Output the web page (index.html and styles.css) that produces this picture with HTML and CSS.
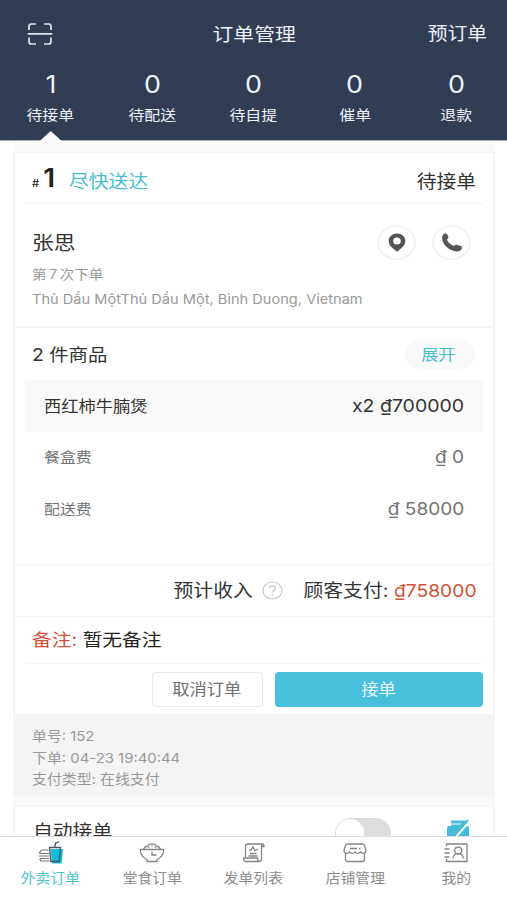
FILE: index.html
```html
<!DOCTYPE html>
<html lang="zh-CN">
<head>
<meta charset="utf-8">
<title>订单管理</title>
<link rel="stylesheet" href="styles.css">
</head>
<body>
<div class="app">
  <header class="header">
    <div class="bar">
      <svg class="scan" width="26" height="24" viewBox="0 0 26 24" fill="none" stroke="#dfe5ec" stroke-width="1.7"><path d="M2 8V4.500Q2 2 4.500 2H9M17 2h4.500Q24 2 24 4.500V8M2 15.500V19.500Q2 22 4.500 22H9M17 22h4.500Q24 22 24 19.500V15.500M.8 11.800h24.400"/></svg>
      <h1 class="title w">订单管理</h1>
      <span class="preorder w right">预订单</span>
    </div>
    <nav class="stats">
      <div class="stat active"><b class="w">1</b><span class="w">待接单</span></div>
      <div class="stat"><b class="w">0</b><span class="w">待配送</span></div>
      <div class="stat"><b class="w">0</b><span class="w">待自提</span></div>
      <div class="stat"><b class="w">0</b><span class="w">催单</span></div>
      <div class="stat"><b class="w">0</b><span class="w">退款</span></div>
    </nav>
  </header>
  <main class="content">
    <article class="card">
      <div class="order-head">
        <div class="order-no w left"><small>#</small><b>1</b><span>尽快送达</span></div>
        <span class="status w right">待接单</span>
      </div>
      <section class="customer">
        <div class="person">
          <h2 class="w left">张思</h2>
          <p class="times w left">第 7 次下单</p>
          <p class="address w left">Thủ Dầu MộtThủ Dầu Một, Bình Duong, Vietnam</p>
        </div>
        <div class="actions">
          <span class="round"><svg width="18" height="19" viewBox="0 0 18 19"><path fill="#555" fill-rule="evenodd" d="M9 .5c4.800 0 8.300 3.300 8.300 7.500 0 3-1.500 5.200-3.800 7.100L9 18.700 4.500 15.100C2.200 13.200.7 11 .7 8 .7 3.800 4.200.5 9 .5Zm0 3.900a3.800 3.500 0 1 0 0 7 3.800 3.500 0 1 0 0-7Z"/></svg></span>
          <span class="round"><svg width="22" height="19" viewBox="0 0 22 19"><path fill="#555" d="M2.200 1.500C3.500.2 5.500.2 6.400 1.700l.8 1.900c.5 1.400-.2 2.100-1.300 3 .8 2.800 3.600 5.300 6.900 6.400 1.200-1.400 2.200-1.600 3.600-1.100l3.400 1.200c1.500.6 1.600 2.200.4 3.600-1.400 1.600-3.500 2.100-6.200 1.500C7.700 16.900 2.700 12.500 1.400 7 .9 4.600 1 2.900 2.200 1.500Z"/></svg></span>
        </div>
      </section>
      <section class="items">
        <div class="items-head"><h3 class="w left">2 件商品</h3><button class="expand"><span class="w">展开</span></button></div>
        <div class="line product"><span class="w left">西红柿牛腩煲</span><span class="price w right">x2 ₫700000</span></div>
        <div class="line"><span class="w left">餐盒费</span><span class="price w right">₫ 0</span></div>
        <div class="line"><span class="w left">配送费</span><span class="price w right">₫ 58000</span></div>
      </section>
      <div class="total">
        <span class="income w right">预计收入</span>
        <svg class="help" width="21" height="19" viewBox="0 0 21 19" fill="none" stroke="#c9c9c9" stroke-width="1.200"><ellipse cx="10.500" cy="9.500" rx="9.500" ry="8.500"/><path d="M7.500 7.600c0-3.600 6-3.400 6-.3 0 2-3 1.900-3 4.200M10.500 12.900v1.400"/></svg>
        <span class="paid w right">顾客支付: <b>₫758000</b></span>
      </div>
      <div class="note"><span class="w left"><em>备注:</em> 暂无备注</span></div>
      <div class="buttons"><button class="cancel"><span class="w">取消订单</span></button><button class="accept"><span class="w">接单</span></button></div>
      <footer class="meta">
        <p class="w left">单号: 152</p>
        <p class="w left">下单: 04-23 19:40:44</p>
        <p class="w left">支付类型: 在线支付</p>
      </footer>
    </article>
    <article class="card auto">
      <h3 class="w left">自动接单</h3>
      <span class="switch"><i></i></span>
      <svg class="printer" width="24" height="24" viewBox="0 0 24 24"><path fill="#45bdd8" d="M5 1.500h16V7H5zM1 9q0-2 2-2h18q2 0 2 2v11H1z"/><path stroke="#fff" stroke-width="1" d="M5 5h10"/><path stroke="#fff" stroke-width="2" d="M23 3 9 19"/><path stroke="#45bdd8" stroke-width="1.500" d="M22.500.8 19 4.800"/></svg>
    </article>
  </main>
  <nav class="tabs">
    <a class="tab on"><svg width="26" height="24" viewBox="0 0 26 24" fill="none"><path fill="#12bdd9" d="M12.500 8H25l-1.300 14.500h-9.500z"/><path stroke="#46535e" stroke-width="1.300" d="M11.500 6.500h11l-1.300 14h-8.300zM16.500 6.300 17.700 2l3.300-1.200"/><path stroke="#6d757c" stroke-width="1.200" d="M10.500 9H5Q1.700 9 1.700 12.500H11M1 15h10M2 17.500h9M2 17.500Q2 20 3.500 20H11.500"/></svg><span class="w">外卖订单</span></a>
    <a class="tab"><svg width="26" height="24" viewBox="0 0 26 24" fill="none" stroke="#858585" stroke-width="1.300"><path d="M2 8.500h22q.7 0 .7.800C24.400 14 21.500 17 18 18.500V20.500H8v-2C4.500 17 1.600 14 1.300 9.300 1.300 8.500 2 8.500 2 8.500ZM4.500 8.300Q5.500 5.500 8.500 5 10 2.800 13 2.800t4.500 2.200q3 .5 4 3.300M9 6l1 .7M13 4.500v1M17 6l-1 .7M13 10.500v3.500h4.500"/></svg><span class="w">堂食订单</span></a>
    <a class="tab"><svg width="26" height="24" viewBox="0 0 26 24" fill="none" stroke="#858585" stroke-width="1.300"><path d="M5.500 16.500V5.500Q5.500 3 8 3h14.500q1.500 0 1.500 2.500H21.500V18q0 2.500-2.500 2.500H6Q3.500 20.500 3.500 17H17.500q0 3.500 2 3.500M21.500 5.500V4q0-1 1-1M9 9.200l2 .2 2-3.600 1.800 3.800 3.200-1.600M10 12.500h6.500M8.500 15h9"/></svg><span class="w">发单列表</span></a>
    <a class="tab"><svg width="26" height="24" viewBox="0 0 26 24" fill="none" stroke="#858585" stroke-width="1.300"><path d="M6 3h14q2 0 2.500 1.500L24 9q0 3.300-2.800 3.300-2 0-2.700-1.500-1 1.500-2.800 1.500-1.700 0-2.700-1.500-1 1.500-2.700 1.500-1.800 0-2.800-1.500-.7 1.500-2.700 1.500Q2 12.300 2 9l1.500-4.500Q4 3 6 3ZM3.500 12.300V18q0 2.500 2 2.500h15q2 0 2-2.500v-5.700M8 7.500h7M17 7.500h1.500"/></svg><span class="w">店铺管理</span></a>
    <a class="tab"><svg width="26" height="24" viewBox="0 0 26 24" fill="none" stroke="#858585" stroke-width="1.300"><path d="M3.500 5.500V3H24v17.500H3.500V18M1.500 8h5M1.500 12h5M1.500 16h5M10 17.500q.5-4.800 5-4.800t5.500 4.800"/><ellipse cx="15.200" cy="9.500" rx="3.500" ry="3.300"/></svg><span class="w">我的</span></a>
  </nav>
</div>
</body>
</html>
```
FILE: styles.css
```css
* { box-sizing: border-box; margin: 0; padding: 0; }
body { width: 507px; height: 900px; overflow: hidden; background: #fff; color: #333; font-family: Inter, "Noto Sans CJK SC", sans-serif; }
h1, h2, h3, b, em { font-weight: 400; font-style: normal; }
button { border: 0; font: inherit; color: inherit; }
.app { height: 900px; display: flex; flex-direction: column; }

/* Wide letterforms used across the interface */
.w { display: block; width: max-content; white-space: pre; transform: scaleX(1.12); transform-origin: center; }
.left { transform-origin: left; }
.right { transform-origin: right; }

.header { height: 141px; flex: none; background: #303d55; color: #eef1f5; border-bottom: 1px solid #a6acb8; }
.bar { height: 67px; display: grid; grid-template-columns: 1fr auto 1fr; align-items: center; padding: 0 20px 0 27px; }
.title { font-size: 18.600px; padding-bottom: 3px; margin-right: 3px; margin-left: -3px; }
.preorder { justify-self: end; font-size: 17.700px; padding-bottom: 3px; }
.stats { height: 73px; display: grid; grid-template-columns: repeat(5, 1fr); }
.stat { display: flex; flex-direction: column; align-items: center; position: relative; }
.stat b { font-size: 24px; line-height: 34px; padding-top: 1px; }
.stat span { font-size: 14.200px; line-height: 20px; margin-top: 3px; }
.stat.active::after { content: ""; position: absolute; bottom: -1px; width: 22px; height: 10px; background: #fafafa; clip-path: polygon(50% 0, 100% 100%, 0 100%); }

.content { flex: 1; min-height: 0; overflow: hidden; margin: 0 12px 0 13px; padding-top: 11px; background: #fafafa; }
.card { background: #fff; border: 1px solid #f5f5f5; border-width: 1px 2px 1px 2px; }
.order-head { height: 51px; margin: 0 10px; padding: 0 8px 0 7px; border-bottom: 1px solid #f3f3f3; display: flex; justify-content: space-between; align-items: center; }
.order-no { display: flex; align-items: baseline; color: #222; }
.order-no small { font-size: 10px; font-weight: 500; width: 9px; }
.order-no b { font-size: 25px; font-weight: 600; width: 24px; padding-left: 1px; }
.order-no span { font-size: 17.700px; color: #48bfcd; transform: translateY(1px); }
.status { font-size: 17.700px; padding-top: 4px; margin-right: -1px; }
.customer { height: 124px; border-bottom: 2px solid #f5f5f5; padding: 21px 22px 0 17px; display: flex; justify-content: space-between; }
.customer h2 { font-size: 19.400px; line-height: 34px; padding-top: 1px; }
.times { margin-top: 2px; font-size: 13px; line-height: 24px; color: #999; word-spacing: -1.500px; }
.address { font-size: 13px; line-height: 26px; color: #999; letter-spacing: .02px; }
.actions { display: flex; gap: 16px; }
.round { width: 39px; height: 35px; border: 2px solid #f3f3f3; border-radius: 50%; display: flex; align-items: center; justify-content: center; }
.items { height: 237px; border-bottom: 1px solid #f3f3f3; padding: 0 10px; }
.items-head { height: 52px; padding: 0 8px 0 7px; display: flex; align-items: center; justify-content: space-between; }
.items-head h3 { font-size: 17.300px; padding-bottom: 2px; }
.expand { width: 70px; height: 30px; border-radius: 15px; background: #f9f9f9; color: #48bfcd; font-size: 15.300px; display: grid; place-items: center; padding: 0 3px 3px 0; }
.line { height: 51.500px; padding: 0 19px 2px; display: flex; align-items: center; justify-content: space-between; font-size: 14.200px; color: #737373; }
.line .price { font-size: 17px; padding-top: 2px; }
.line.product { background: #f9f9f9; color: #333; font-size: 15.400px; padding-bottom: 1px; }
.line.product .price { font-size: 17.400px; padding-top: 1px; }
.total { height: 52px; border-bottom: 1px solid #f3f3f3; padding: 0 16px 3px 0; display: flex; align-items: center; justify-content: flex-end; font-size: 17.700px; }
.help { margin: 2px 39px 0 10px; }
.paid b { color: #d25237; font-size: 17.200px; }
.note { height: 47px; margin: 0 10px; padding: 0 0 3px 7px; border-bottom: 1px solid #f5f5f5; display: flex; align-items: center; font-size: 17.600px; color: #222; }
.note em { color: #d25237; }
.buttons { height: 50px; padding: 8px 10px 7px; display: flex; justify-content: flex-end; gap: 12px; font-size: 15.400px; }
.buttons button { display: grid; place-items: center; border-radius: 4px; padding: 0 2px 3px 0; }
.cancel { width: 111px; background: #fff; border: 1px solid #eaeaea; color: #707070; }
.accept { width: 208px; background: #48c0dd; color: #eefaff; }
.meta { height: 82px; margin: 0 -1px; padding: 12px 18px 0; background: #f4f4f4; color: #999; font-size: 13.300px; line-height: 21.500px; }
.auto { margin-top: 9px; height: 60px; padding: 10px 23px 0 18px; display: flex; align-items: flex-start; }
.auto h3 { font-size: 17.700px; line-height: 30px; margin-right: auto; }
.switch { width: 56px; height: 30px; margin-top: 1px; border-radius: 15px; background: #ddd; border: 1px solid #ddd; }
.switch i { display: block; width: 28px; height: 28px; border-radius: 14px; background: #fff; }
.printer { margin: 2px 0 0 55px; }

.tabs { height: 64px; flex: none; border-top: 1px solid #ddd; background: #fff; display: grid; grid-template-columns: repeat(5, 1fr); }
.tab { display: flex; flex-direction: column; align-items: center; padding-top: 4px; color: #8c8c8c; font-size: 13.200px; }
.tab span { line-height: 20px; margin-top: 3px; }
.tab.on { color: #4dc4ca; }
```
